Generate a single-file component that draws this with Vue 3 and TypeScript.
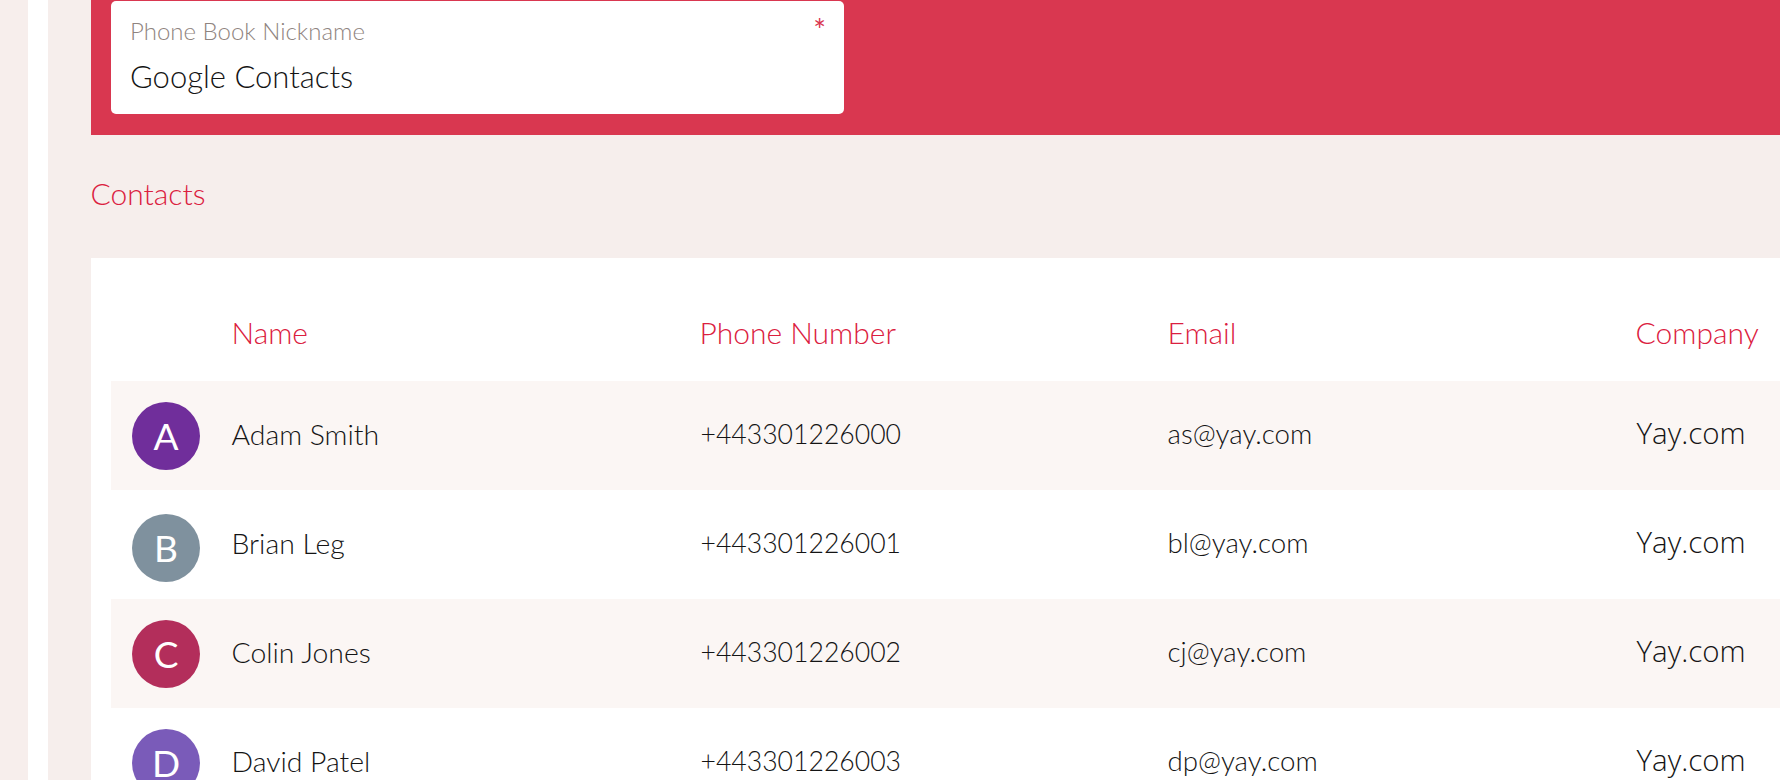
<script setup lang="ts">
interface Contact {
  initial: string
  name: string
  phone: string
  email: string
  company: string
  color: string
}

const contacts: Contact[] = [
  { initial: 'A', name: 'Adam Smith', phone: '+443301226000', email: 'as@yay.com', company: 'Yay.com', color: '#702e9b' },
  { initial: 'B', name: 'Brian Leg', phone: '+443301226001', email: 'bl@yay.com', company: 'Yay.com', color: '#7f919e' },
  { initial: 'C', name: 'Colin Jones', phone: '+443301226002', email: 'cj@yay.com', company: 'Yay.com', color: '#b32e5b' },
  { initial: 'D', name: 'David Patel', phone: '+443301226003', email: 'dp@yay.com', company: 'Yay.com', color: '#7a5bb9' }
]
</script>

<template>
  <div class="page">
    <div class="strip"></div>
    <main class="main">
      <section class="band">
        <div class="field">
          <div class="field-head">
            <span class="field-label">Phone Book Nickname</span>
            <span class="required">*</span>
          </div>
          <div class="field-value">Google Contacts</div>
        </div>
      </section>
      <h2 class="section-title">Contacts</h2>
      <section class="panel">
        <div class="grid head">
          <span></span>
          <span>Name</span>
          <span>Phone Number</span>
          <span>Email</span>
          <span>Company</span>
        </div>
        <div v-for="c in contacts" :key="c.email" class="grid row">
          <span class="avatar" :class="{ nudge: c.initial === 'B' }" :style="{ background: c.color }">{{ c.initial }}</span>
          <span class="name">{{ c.name }}</span>
          <span class="phone">{{ c.phone }}</span>
          <span class="email">{{ c.email }}</span>
          <span class="company">{{ c.company }}</span>
        </div>
      </section>
    </main>
  </div>
</template>

<style>
html, body { margin: 0; background: #fff; overflow: hidden; }
</style>

<style scoped>
.page {
  display: flex;
  width: 1780px;
  height: 780px;
  overflow: hidden;
  font-family: Lato, "Open Sans", sans-serif;
  font-weight: 300;
  background: #fff;
}
.strip { width: 28px; flex: none; background: #f7eeec; margin-right: 20px; }
.main { flex: 1; min-width: 0; background: #f6eeec; padding-left: 42.5px; }
.band { background: #d93750; height: 135px; padding: 1px 0 0 20.5px; box-sizing: border-box; }
.field {
  width: 733px;
  height: 113px;
  background: #fff;
  border-radius: 5px;
  box-sizing: border-box;
  padding: 16px 19px 0 19px;
}
.field-head { display: flex; justify-content: space-between; }
.field-label { font-size: 24px; line-height: 28px; color: #8f8480; font-weight: 300; }
.required { font-size: 30px; line-height: 30px; color: #d93750; font-weight: 400; margin-top: -3px; margin-right: -1px; }
.field-value { font-size: 31px; line-height: 36px; color: #141414; margin-top: 13px; font-weight: 300; }
.section-title {
  margin: 0;
  height: 123px;
  font-weight: 300;
  font-size: 30px;
  line-height: 116px;
  color: #db2040;
}
.panel { background: #fff; height: 600px; padding: 0 0 0 20.5px; }
.grid {
  display: grid;
  grid-template-columns: 120.5px 468px 468px 468px 1fr;
  align-items: center;
}
.head { height: 123px; padding-top: 24px; box-sizing: border-box; color: #db2040; font-size: 30px; }
.row { height: 109px; color: #141414; font-weight: 300; }
.row:nth-child(even) { background: #fbf6f4; }
.avatar {
  width: 68px;
  height: 68px;
  margin-left: 21px;
  border-radius: 50%;
  color: #fff;
  font-size: 37px;
  font-weight: 400;
  display: flex;
  align-items: center;
  justify-content: center;
}
.nudge { margin-top: 6px; }
.name { font-size: 28.4px; margin-top: -4px; }
.phone { font-size: 26.6px; margin-top: -3px; margin-left: 1px; }
.email { font-size: 27.7px; margin-top: -4px; }
.company { font-family: "Open Sans", sans-serif; font-size: 29.5px; margin-top: -6px; margin-left: 1px; font-weight: 300; color: #141414; }
</style>
